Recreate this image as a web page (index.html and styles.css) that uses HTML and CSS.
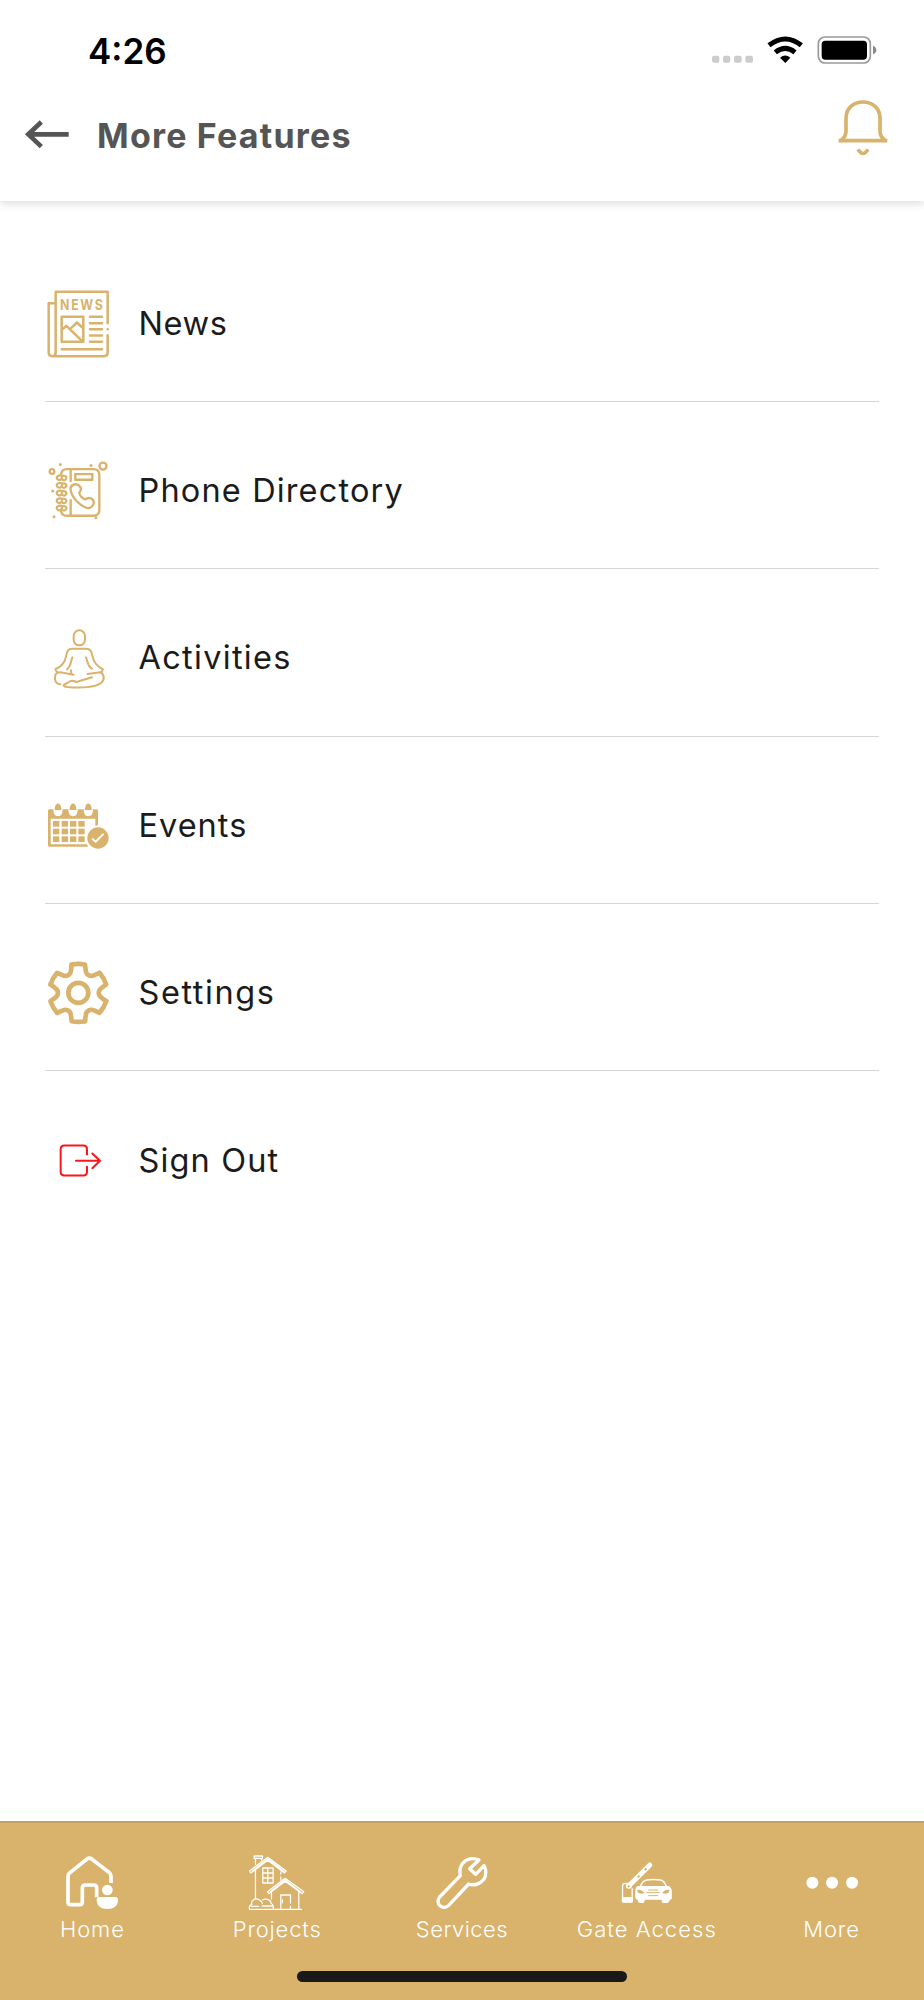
FILE: index.html
```html
<!DOCTYPE html>
<html lang="en">
<head>
<meta charset="utf-8">
<title>More Features</title>
<link rel="stylesheet" href="styles.css">
</head>
<body>
<div class="screen">
  <header class="header">
    <div class="status">
      <span class="time">4:26</span>
      <svg class="status-icons" viewBox="150 100 510 100">
        <g fill="#ccc"><rect x="156" y="168" width="22" height="21" rx="6"/><rect x="189" y="168" width="22" height="21" rx="6"/><rect x="222" y="168" width="23" height="21" rx="6"/><rect x="256" y="168" width="23" height="21" rx="6"/></g>
        <g fill="none" stroke="#000" stroke-width="15"><path d="M327 137Q376 99 424 137"/><path d="M346 158Q376 134 405 158"/></g>
        <path d="M360 174Q376 161 391 174L376 190Z"/>
        <rect x="475" y="112" width="156" height="78" rx="20" fill="none" stroke="#999" stroke-width="5"/>
        <rect x="485" y="123" width="136" height="57" rx="11"/>
        <path d="M639 138Q649 142 649 151T639 164Z" fill="#888"/>
      </svg>
    </div>
    <div class="titlebar">
      <svg class="back" viewBox="70 350 144 102" fill="none" stroke="#555" stroke-width="14"><path d="M207 402H85M125 365L86 402L125 439"/></svg>
      <h1 class="title">More Features</h1>
      <svg class="bell" viewBox="530 295 156 180" fill="none" stroke="#d9b26b" stroke-width="11"><path d="M535 423H681M543 421Q557 411 557 394V356C557 326 579 307 608 307S659 326 659 356V394Q659 411 673 421"/><path d="M593 449Q608 474 623 449"/></svg>
    </div>
  </header>

  <main class="list">
    <a class="row">
      <svg class="icon" viewBox="39 55.5 210 210" fill="none" stroke="#d9b26b" stroke-width="7.5" stroke-linecap="round" stroke-linejoin="round">
        <path d="M233 158V64H77V246Q77 257 67 257Q56 257 56 246V98H76M67 257H222Q233 257 233 246V194"/><path d="M233 176V176.1"/>
        <path d="M95 139H160V214H95ZM98 176L109 166L156 211M124 172L141 156L158 172M180 139H216M180 158H216M180 176H216M180 195H216M180 214H216M95 236H216"/>
        <text class="news-mark" x="90" y="118" textLength="134" lengthAdjust="spacingAndGlyphs">NEWS</text>
      </svg>
      <span class="label l-news">News</span>
    </a>
    <a class="row">
      <svg class="icon" viewBox="39 47.7 210 210" fill="none" stroke="#d9b26b" stroke-width="7" stroke-linecap="round" stroke-linejoin="round">
        <path d="M93 103Q95 87 111 87H190Q208 87 208 105V208Q208 227 190 227H111Q95 227 93 213M122 90V123M122 180V225"/>
        <path d="M136 102H187V119H136Z" stroke-linejoin="miter"/>
        <path d="M122 150C119 134 136 128 148 137C156 144 153 151 148 158C147 165 158 176 166 178C174 171 188 172 191 184C193 196 181 207 169 203C149 196 126 173 122 150Z"/>
        <g stroke-width="6.5">
          <path id="ring" d="M98 107C84 103 77 110 82 117C88 123 96 119 96 111M100 107C108 106 112 113 107 118Q103 122 98 119"/>
          <use href="#ring" y="23"/><use href="#ring" y="46"/><use href="#ring" y="69"/><use href="#ring" y="91"/>
        </g>
        <circle cx="66" cy="94" r="7"/><circle cx="219" cy="78" r="10.5"/>
        <g fill="#d9b26b" stroke="none"><circle cx="91" cy="73" r="4.5"/><circle cx="183" cy="76" r="4.5"/><circle cx="68" cy="153" r="4.5"/><circle cx="72" cy="230" r="4.5"/><circle cx="198" cy="233" r="4.5"/></g>
      </svg>
      <span class="label l-phone">Phone Directory</span>
    </a>
    <a class="row">
      <svg class="icon" viewBox="39 40 210 210" fill="none" stroke="#d9b26b" stroke-width="6" stroke-linecap="round" stroke-linejoin="round">
        <rect x="131" y="62" width="34" height="45" rx="17"/>
        <path d="M91 224C77 223 72 210 76 197C78 190 84 188 91 188L131 195M83 188L77 182V178C94 171 105 158 108 140C111 123 115 117 126 117H170C180 117 185 124 187 138C191 158 201 171 219 179L215 187L173 193M127 143C122 155 124 168 111 179M123 182L124 192M168 143C174 156 172 171 186 177M212 189C224 194 224 212 213 220C197 233 151 236 113 232C99 230 98 227 104 224L122 214Q127 212 132 214L139 217L186 203"/>
      </svg>
      <span class="label l-act">Activities</span>
    </a>
    <a class="row">
      <svg class="icon" viewBox="39 32 210 210" fill="#d9b26b">
        <path d="M58 87H70Q70 108 84 108T98 87H115Q115 108 129 108T143 87H161Q161 108 175 108T189 87H200Q204 87 204 91V135Q197 135 196 137V115H62V192H171Q172 196 175 199H58Q54 199 54 195V91Q54 87 58 87Z"/>
        <path d="M74 89C74 63 94 63 94 89ZM119 89C119 63 139 63 139 89ZM165 89C165 63 185 63 185 89Z"/>
        <g id="cells"><rect x="69" y="122" width="19" height="17"/><rect x="95" y="122" width="19" height="17"/><rect x="120" y="122" width="19" height="17"/><rect x="145" y="122" width="19" height="17"/></g>
        <use href="#cells" y="23"/><use href="#cells" y="46"/>
        <circle cx="204" cy="173" r="35" fill="#fff"/><circle cx="204" cy="173" r="32"/>
        <path d="M188 176L197 184L219 162" fill="none" stroke="#fff" stroke-width="6" stroke-linecap="round"/>
      </svg>
      <span class="label l-events">Events</span>
    </a>
    <a class="row">
      <svg class="icon" viewBox="39 55.5 210 210" fill="none" stroke="#d9b26b" stroke-width="14" stroke-linecap="round" stroke-linejoin="round">
        <g transform="translate(145 160)">
          <circle r="30"/>
          <path id="tooth" d="M-20-85Q0-89 20-85L22-68C23-54 35.3-46.9 47.9-53.1L63.6-59.8"/>
          <use href="#tooth" transform="rotate(60)"/><use href="#tooth" transform="rotate(120)"/><use href="#tooth" transform="rotate(180)"/><use href="#tooth" transform="rotate(240)"/><use href="#tooth" transform="rotate(300)"/>
        </g>
      </svg>
      <span class="label l-set">Settings</span>
    </a>
    <a class="row">
      <svg class="icon" viewBox="39 46.5 210 210" fill="none" stroke="#f8171b" stroke-width="6" stroke-linecap="round" stroke-linejoin="round">
        <path d="M171 132V116Q171 105 160 105H103Q92 105 92 116V184Q92 195 103 195H160Q171 195 171 184V169M138 151H210M187 129L210 151L187 173"/>
      </svg>
      <span class="label l-out">Sign Out</span>
    </a>
  </main>

  <nav class="tabs">
    <div class="tabrow">
      <a class="tab">
        <svg class="tab-icon" viewBox="187 129 180 180" fill="none" stroke="#fff" stroke-width="11" stroke-linejoin="round">
          <path d="M334 219V198Q334 192 329 188L276 147Q269 142 262 147L212 187Q205 192 205 201V276Q205 284 213 284H240Q248 284 248 276V234Q248 225 257 225H282Q291 225 291 234V262"/>
          <g fill="#fff" stroke="none"><circle cx="323" cy="240" r="20" fill="#d9b26b"/><circle cx="323" cy="240" r="16"/><path d="M299 261H347Q355 261 355 270C355 288 342 297 323 297S291 288 291 270Q291 261 299 261Z"/></g>
        </svg>
        <span class="t-home">Home</span>
      </a>
      <a class="tab">
        <svg class="tab-icon" viewBox="741.6 129 180 180" fill="none" stroke="#fff" stroke-width="3.8" stroke-linecap="round" stroke-linejoin="round">
          <path d="M767 163V145H763V138H788V145H767M785 145V150M804 142L749 183L753 189L804 151L854 189L859 183ZM757 184L804 147L852 184M767 181V266M843 186V192M843 201V210"/>
          <path d="M789 174H820V219H789ZM804 174V219M789 189H820M789 204H820"/>
          <path d="M856 205L803 245L807 251L856 214L907 251L912 245ZM811 246L856 210L903 246M815 248V267M897 246V297M749 298H905"/>
          <path d="M843 297V255H872V279M872 289V297M848 270V278"/>
          <path d="M749 297C747 288 751 285 756 284C752 269 768 262 779 270Q786 274 788 281M788 270C796 265 812 266 814 280C822 285 822 290 820 297M754 289H777M787 288H819"/>
        </svg>
        <span class="t-proj">Projects</span>
      </a>
      <a class="tab">
        <svg class="tab-icon" viewBox="276 129 180 180" fill="none" stroke="#fff" stroke-width="10" stroke-linejoin="round">
          <path d="M361 197L299 261C292 269 293 281 300 287C308 294 319 293 326 286L386 222C407 229 430 218 436 198Q440 181 432 167L407 193L389 176L417 150C400 142 380 146 368 160Q356 176 361 197Z"/>
        </svg>
        <span class="t-serv">Services</span>
      </a>
      <a class="tab">
        <svg class="tab-icon" viewBox="170.4 129 180 180" fill="#fff">
          <path d="M187 275V229Q187 220 196 220H203M216 235V275" fill="none" stroke="#fff" stroke-width="4"/>
          <path d="M185 261H218V275Q218 278 215 278H188Q185 278 185 275Z"/>
          <path d="M206 227L269 165" stroke="#fff" stroke-width="15" stroke-linecap="round"/>
          <circle cx="206" cy="227" r="9"/>
          <g stroke="#d9b26b" stroke-width="6"><path d="M203 227L208 231M233 202L238 197M254 180L259 175"/></g>
          <path d="M241 229Q247 212 260 210Q280 207 301 210Q312 212 318 229" fill="none" stroke="#fff" stroke-width="5"/>
          <path d="M233 228H325Q335 232 335 246V264Q335 269 329 270L326 276Q324 279 318 279H309Q305 279 304 269H254Q252 279 247 279H238Q234 279 232 270Q225 269 225 262V244Q225 232 233 228Z"/>
          <g fill="none" stroke="#d9b26b" stroke-width="3"><path d="M264 240H294M259 248H299M264 257H294"/></g>
          <path d="M231 240Q243 237 253 248Q241 255 233 247ZM328 240Q316 237 306 248Q318 255 326 247Z" fill="#d9b26b"/>
        </svg>
        <span class="t-gate">Gate Access</span>
      </a>
      <a class="tab">
        <svg class="tab-icon" viewBox="724.8 129 180 180" fill="#fff"><circle cx="756" cy="218" r="18"/><circle cx="815" cy="218" r="18"/><circle cx="875" cy="218" r="18"/></svg>
        <span class="t-more">More</span>
      </a>
    </div>
    <div class="home-bar"></div>
  </nav>
</div>
</body>
</html>
```

FILE: styles.css
```css
* { box-sizing: border-box; }
body { margin: 0; background: #fff; font-family: Inter, "Liberation Sans", sans-serif; }
.screen { width: 924px; height: 2000px; display: flex; flex-direction: column; background: #fff; }
.header { height: 201px; flex: none; box-shadow: 0 3px 8px rgba(0, 0, 0, .13); }
.status { height: 96px; padding: 33px 44px 0 88px; display: flex; justify-content: space-between; align-items: flex-start; }
.time { font-size: 35px; line-height: 36px; font-weight: 600; color: #000; }
.status-icons { width: 170px; height: 33.33px; }
.titlebar { height: 80px; padding: 2px 35px 0 23px; display: flex; align-items: flex-start; }
.back { width: 48px; height: 34px; margin-top: 19px; }
.title { margin: 17px auto 0 26px; font-size: 34px; line-height: 42px; font-weight: 700; letter-spacing: 1.2px; color: #555; white-space: nowrap; }
.bell { width: 52px; height: 60px; }
.list { flex: 1; padding: 33.5px 45px 0; }
.row { height: 167.4px; padding-top: 12px; display: flex; align-items: center; border-bottom: 1.5px solid #d5d5d5; }
.row:last-child { border-bottom-color: transparent; }
.icon { width: 70px; height: 70px; margin-left: -2px; flex: none; }
.label { margin-left: 25.5px; font-size: 32.5px; line-height: 44px; font-weight: 400; color: #1b1b1b; white-space: nowrap; }
.l-news { letter-spacing: .6px; }
.l-phone { letter-spacing: 1.15px; }
.l-act { letter-spacing: 1.3px; }
.l-events { letter-spacing: 1px; }
.l-set { letter-spacing: 1.55px; }
.l-out { letter-spacing: 1.15px; }
.news-mark { font-size: 43px; font-weight: 700; letter-spacing: 6px; fill: #d9b26b; stroke: none; }
.tabs { height: 179px; flex: none; background: #d9b26b; border-top: 2px solid #c4a062; }
.tabrow { display: flex; padding-top: 30px; }
.tab { width: 184.8px; display: flex; flex-direction: column; align-items: center; color: #fff; font-size: 22px; line-height: 32px; font-weight: 300; white-space: nowrap; }
.tab-icon { width: 60px; height: 60px; }
.t-home, .t-more { letter-spacing: .9px; }
.t-proj { letter-spacing: .8px; }
.t-serv { letter-spacing: .45px; }
.t-gate { letter-spacing: 1.05px; }
.home-bar { width: 330px; height: 11px; margin: 26px auto 0; border-radius: 6px; background: #191919; }
```
